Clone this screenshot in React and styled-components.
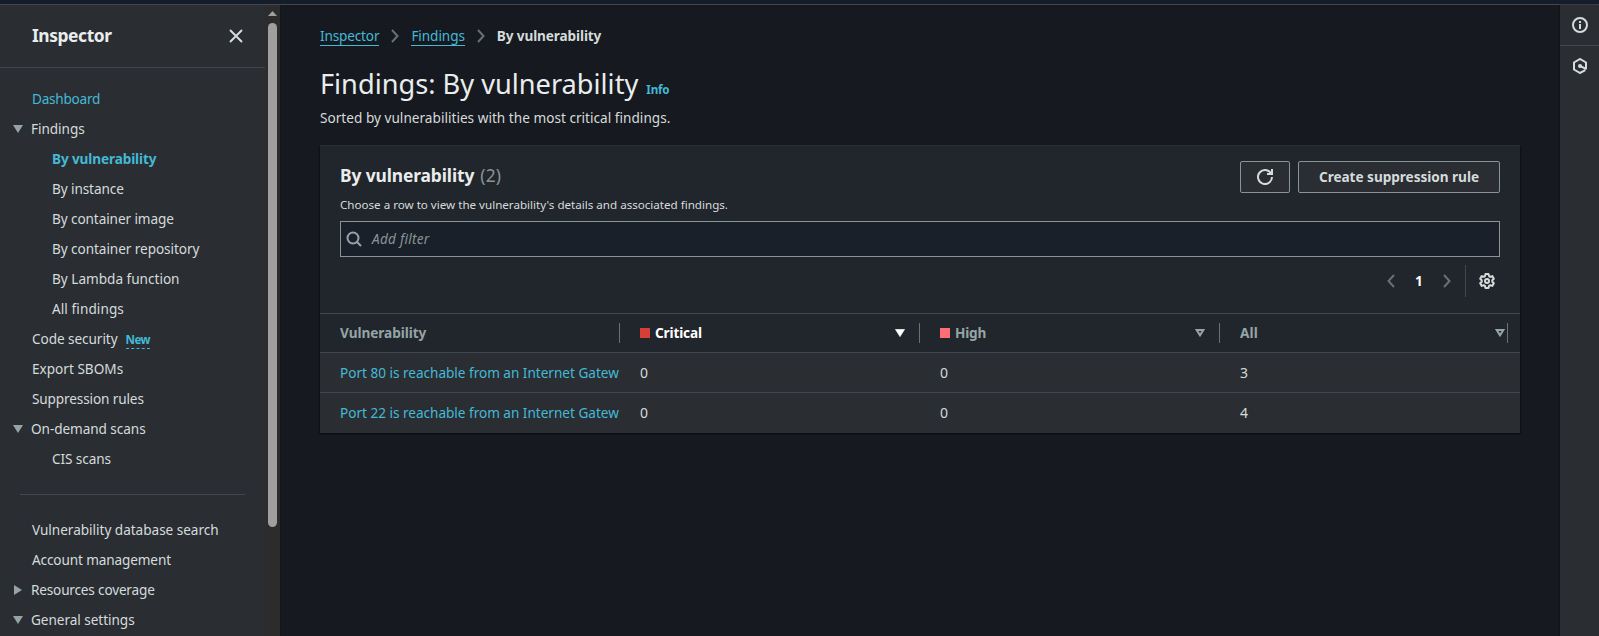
import React from "react";
import styled, { createGlobalStyle, css } from "styled-components";

const color = {
  page: "#16191f",
  panel: "#21252c",
  surface: "#2a2e33",
  line: "#414750",
  text: "#d5dbdb",
  heading: "#eaeded",
  muted: "#95a5a6",
  control: "#879596",
  disabled: "#687078",
  link: "#44b9d6",
};

const GlobalStyle = createGlobalStyle`
  * { box-sizing: border-box; }
  body {
    margin: 0;
    overflow: hidden;
    background: ${color.page};
    color: ${color.text};
    font-family: "Noto Sans", "Open Sans", sans-serif;
    font-size: 13.6px;
    line-height: 20px;
  }
  svg { display: block; flex: none; }
  h1, h2, p, ul { margin: 0; padding: 0; }
  a { color: ${color.link}; text-decoration: none; }
`;

const tracked = css`
  letter-spacing: ${(p) => p.$track ?? -0.03}px;
  white-space: nowrap;
`;

const Shell = styled.div`
  display: flex;
  flex-direction: column;
  height: 636px;
`;

const TopStrip = styled.div`
  height: 5px;
  flex: none;
  background: #161d2a;
  border-bottom: 1px solid ${color.line};
`;

const Body = styled.div`
  display: flex;
  flex: 1;
  min-height: 0;
`;

/* Side navigation */

const Sidebar = styled.nav`
  display: flex;
  width: 281px;
  flex: none;
  background: ${color.surface};
  border-right: 1px solid #121519;
  overflow: hidden;
`;

const SideContent = styled.div`
  width: 265px;
  flex: none;
`;

const SideHeader = styled.header`
  display: flex;
  align-items: center;
  justify-content: space-between;
  height: 63px;
  padding: 0 21px 1px 32px;
  border-bottom: 1px solid ${color.line};
`;

const SideTitle = styled.h2`
  ${tracked}
  margin-bottom: 2px;
  color: ${color.heading};
  font-size: 17.4px;
  line-height: 22px;
`;

const NavList = styled.ul`
  list-style: none;
  padding-top: ${(p) => p.$top}px;
`;

const NavRow = styled.li`
  display: flex;
  align-items: center;
  height: 30px;
  padding-left: ${(p) => ({ top: 32, group: 13, nested: 52 })[p.$kind]}px;
`;

const NavLink = styled.a`
  ${tracked}
  color: ${(p) => (p.$blue ? color.link : color.text)};
  font-weight: ${(p) => (p.$bold ? 700 : 400)};
`;

const GroupArrow = styled.svg`
  width: 10px;
  height: 10px;
  margin-right: 8px;
  fill: ${color.muted};
`;

const NewTag = styled.span`
  ${tracked}
  height: 18px;
  margin: 2px 0 0 8px;
  color: ${color.link};
  border-bottom: 1px dashed ${color.link};
  font-size: 11.65px;
  font-weight: 700;
  line-height: 17px;
`;

const NavDivider = styled.hr`
  height: 1px;
  margin: 20px 20px 0;
  border: 0;
  background: ${color.line};
`;

const ScrollTrack = styled.div`
  display: flex;
  flex-direction: column;
  align-items: center;
  width: 15px;
  padding-top: 6px;
  background: #2c2c2c;
`;

const ScrollThumb = styled.div`
  width: 9px;
  height: 504px;
  margin-top: 7px;
  border-radius: 5px;
  background: #9f9f9f;
`;

/* Main column */

const Main = styled.main`
  flex: 1;
  min-width: 0;
  padding: 21px 40px 0 39px;
`;

const Breadcrumbs = styled.nav`
  display: flex;
  align-items: center;
  height: 20px;
`;

const Crumb = styled.a`
  ${tracked}
  height: 20px;
  border-bottom: 1px solid ${color.link};
`;

const CurrentCrumb = styled.span`
  ${tracked}
  color: ${color.text};
  font-weight: 700;
`;

const CrumbArrow = styled.svg`
  width: 8px;
  height: 14px;
  margin: 0 12px;
  fill: none;
  stroke: ${color.disabled};
  stroke-width: 2;
`;

const PageHeading = styled.div`
  display: flex;
  align-items: baseline;
  height: 36px;
  margin-top: 20px;
`;

const PageTitle = styled.h1`
  ${tracked}
  color: ${color.heading};
  font-size: 27.2px;
  font-weight: 400;
  line-height: 36px;
`;

const InfoLink = styled.a`
  ${tracked}
  margin-left: 8px;
  font-size: 11.65px;
  font-weight: 700;
`;

const PageNote = styled.p`
  ${tracked}
  margin: 6px 0 17px;
`;

const Panel = styled.section`
  background: ${color.panel};
  border-top: 1px solid #2a2e33;
  box-shadow: 0 1px 1px #0b0d10, 1px 1px 1px #101317, -1px 1px 1px #101317;
`;

const PanelTop = styled.div`
  display: flex;
  flex-direction: column;
  height: 167px;
  padding: 15px 20px 0;
`;

const PanelHeader = styled.div`
  display: flex;
  justify-content: space-between;
  height: 60px;
`;

const PanelTitle = styled.h2`
  ${tracked}
  display: flex;
  gap: 6px;
  margin-top: 2px;
  color: ${color.heading};
  font-size: 17.4px;
  line-height: 24px;
`;

const Count = styled.span`
  color: ${color.control};
  font-weight: 400;
  letter-spacing: 0.2px;
`;

const PanelNote = styled.p`
  ${tracked}
  margin-top: 10px;
  font-size: 11.65px;
  line-height: 16px;
`;

const Actions = styled.div`
  display: flex;
  gap: 8px;
`;

const Button = styled.button`
  ${tracked}
  display: flex;
  align-items: center;
  justify-content: center;
  width: ${(p) => p.$width}px;
  height: 32px;
  padding: 0;
  border: 1px solid ${color.control};
  border-radius: 2px;
  background: ${color.surface};
  color: ${color.text};
  font: inherit;
  font-weight: 700;
`;

const FilterBox = styled.div`
  ${tracked}
  display: flex;
  align-items: center;
  gap: 10px;
  height: 36px;
  flex: none;
  padding-left: 5px;
  border: 1px solid ${color.control};
  background: #1a2029;
  color: ${color.control};
  font-style: italic;
`;

const Pager = styled.div`
  display: flex;
  align-items: center;
  justify-content: flex-end;
  height: 32px;
  margin-top: 8px;
  padding-right: 5px;
`;

const PageNumber = styled.span`
  width: 48px;
  color: #fff;
  font-weight: 700;
  text-align: center;
`;

const PagerArrow = styled.svg`
  width: 8px;
  height: 14px;
  fill: none;
  stroke: ${color.disabled};
  stroke-width: 2;
`;

const PreferencesSlot = styled.div`
  display: flex;
  align-items: center;
  height: 32px;
  margin-left: 14px;
  padding-left: 13px;
  border-left: 1px solid ${color.line};
`;

const LineIcon = styled.svg`
  width: 16px;
  height: 16px;
  fill: none;
  stroke: ${(p) => p.$stroke || color.text};
  stroke-width: 2;
`;

/* Table */

const TableRow = styled.div`
  display: grid;
  grid-template-columns: 300px 300px 300px 300px;
  align-items: center;
  height: ${(p) => p.$height}px;
  border-top: 1px solid ${color.line};
  background: ${(p) => (p.$head ? color.panel : color.surface)};
`;

const HeadCell = styled.div`
  display: flex;
  align-items: center;
  height: 20px;
  margin-right: ${(p) => (p.$last ? 12 : 0)}px;
  padding: 0 ${(p) => (p.$last ? 2 : 14)}px 0 20px;
  border-right: 1px solid ${color.disabled};
  color: ${(p) => (p.$active ? "#fff" : color.muted)};
  font-weight: 700;
`;

const HeadLabel = styled.span`
  ${tracked}
  flex: 1;
`;

const Swatch = styled.span`
  width: 10px;
  height: 10px;
  margin-right: 5px;
  background: ${(p) => p.$fill};
`;

const SortArrow = styled.svg`
  width: 10px;
  height: 8px;
  margin-top: -1px;
  fill: ${(p) => (p.$filled ? "currentColor" : "none")};
  stroke: currentColor;
  stroke-width: ${(p) => (p.$filled ? 0.5 : 2)};
`;

const Cell = styled.div`
  padding-left: 20px;
`;

const NumberCell = styled(Cell)`
  font-size: 14px;
`;

const RowLink = styled.a`
  ${tracked}
  display: block;
  overflow: hidden;
`;

/* Tool rail */

const Rail = styled.aside`
  width: 39px;
  flex: none;
  background: ${color.surface};
  box-shadow: -1px 0 1px #101317;
`;

const RailButton = styled.div`
  display: flex;
  align-items: center;
  justify-content: center;
  height: ${(p) => (p.$ruled ? 41 : 40)}px;
  padding-left: 1px;
  border-bottom: ${(p) => (p.$ruled ? `1px solid ${color.line}` : "0")};
`;

const navMain = [
  { label: "Dashboard", kind: "top", blue: true, track: -0.24 },
  { label: "Findings", kind: "group", track: -0.05 },
  { label: "By vulnerability", kind: "nested", blue: true, bold: true, track: -0.12 },
  { label: "By instance", kind: "nested", track: -0.1 },
  { label: "By container image", kind: "nested", track: -0.1 },
  { label: "By container repository", kind: "nested", track: -0.07 },
  { label: "By Lambda function", kind: "nested", track: -0.01 },
  { label: "All findings", kind: "nested", track: 0.08 },
  { label: "Code security", kind: "top", isNew: true, track: -0.07 },
  { label: "Export SBOMs", kind: "top", track: 0 },
  { label: "Suppression rules", kind: "top", track: -0.13 },
  { label: "On-demand scans", kind: "group", track: -0.07 },
  { label: "CIS scans", kind: "nested", track: -0.1 },
];

const navMore = [
  { label: "Vulnerability database search", kind: "top", track: -0.03 },
  { label: "Account management", kind: "top", track: -0.13 },
  { label: "Resources coverage", kind: "group", closed: true, track: -0.18 },
  { label: "General settings", kind: "group", track: -0.05 },
];

const findings = [
  { title: "Port 80 is reachable from an Internet Gatew", critical: 0, high: 0, all: 3 },
  { title: "Port 22 is reachable from an Internet Gatew", critical: 0, high: 0, all: 4 },
];

function NavItems({ items, top }) {
  return (
    <NavList $top={top}>
      {items.map((item) => (
        <NavRow key={item.label} $kind={item.kind}>
          {item.kind === "group" && (
            <GroupArrow viewBox="0 0 10 10">
              <path d={item.closed ? "M1 0 9 5 1 10z" : "M0 1h10L5 9z"} />
            </GroupArrow>
          )}
          <NavLink $blue={item.blue} $bold={item.bold} $track={item.track}>
            {item.label}
          </NavLink>
          {item.isNew && <NewTag $track={-0.6}>New</NewTag>}
        </NavRow>
      ))}
    </NavList>
  );
}

function Chevron({ as: Icon, left }) {
  return (
    <Icon viewBox="0 0 8 14">
      <path d={left ? "M7 1 1.5 7 7 13" : "M1 1 6.5 7 1 13"} />
    </Icon>
  );
}

function Sort({ filled }) {
  return (
    <SortArrow viewBox="0 0 10 8" $filled={filled}>
      <path d={filled ? "M.3.3h9.4L5 7.7z" : "M1.7 1h6.6L5 6.3z"} />
    </SortArrow>
  );
}

export default function App() {
  return (
    <Shell>
      <GlobalStyle />
      <TopStrip />
      <Body>
        <Sidebar>
          <SideContent>
            <SideHeader>
              <SideTitle $track={-0.42}>Inspector</SideTitle>
              <LineIcon viewBox="0 0 16 16">
                <path d="m2 2 12 12M14 2 2 14" />
              </LineIcon>
            </SideHeader>
            <NavItems items={navMain} top={16} />
            <NavDivider />
            <NavItems items={navMore} top={20} />
          </SideContent>
          <ScrollTrack>
            <svg width="9" height="5" viewBox="0 0 9 5" fill="#9f9f9f">
              <path d="M4.5 0 9 5H0z" />
            </svg>
            <ScrollThumb />
          </ScrollTrack>
        </Sidebar>

        <Main>
          <Breadcrumbs>
            <Crumb $track={-0.16}>Inspector</Crumb>
            <Chevron as={CrumbArrow} />
            <Crumb $track={-0.08}>Findings</Crumb>
            <Chevron as={CrumbArrow} />
            <CurrentCrumb $track={-0.12}>By vulnerability</CurrentCrumb>
          </Breadcrumbs>
          <PageHeading>
            <PageTitle $track={0}>Findings: By vulnerability</PageTitle>
            <InfoLink $track={-0.2}>Info</InfoLink>
          </PageHeading>
          <PageNote $track={0.02}>
            Sorted by vulnerabilities with the most critical findings.
          </PageNote>

          <Panel>
            <PanelTop>
              <PanelHeader>
                <div>
                  <PanelTitle $track={-0.11}>
                    By vulnerability <Count>(2)</Count>
                  </PanelTitle>
                  <PanelNote $track={-0.02}>
                    Choose a row to view the vulnerability's details and associated findings.
                  </PanelNote>
                </div>
                <Actions>
                  <Button $width={50} aria-label="Refresh">
                    <LineIcon viewBox="0 0 16 16">
                      <path d="M10 5h5V0M15 8a7 7 0 1 1-.9-3.4" />
                    </LineIcon>
                  </Button>
                  <Button $width={202} $track={-0.03}>Create suppression rule</Button>
                </Actions>
              </PanelHeader>
              <FilterBox $track={0.25}>
                <LineIcon viewBox="0 0 16 16" $stroke={color.muted}>
                  <circle cx="7" cy="7" r="5.5" />
                  <path d="m11 11 4 4" />
                </LineIcon>
                Add filter
              </FilterBox>
              <Pager>
                <Chevron as={PagerArrow} left />
                <PageNumber>1</PageNumber>
                <Chevron as={PagerArrow} />
                <PreferencesSlot>
                  <LineIcon viewBox="0 0 16 16">
                    <path
                      strokeLinejoin="round"
                      d="M6.5 1h3l.5 2.1 1.2.7 2.1-.7 1.5 2.6-1.5 1.5v1.6l1.5 1.5-1.5 2.6-2.1-.7-1.2.7-.5 2.1h-3L6 12.9l-1.2-.7-2.1.7-1.5-2.6 1.5-1.5V7.2L1.2 5.7l1.5-2.6 2.1.7L6 3.1z"
                    />
                    <circle cx="8" cy="8" r="2" />
                  </LineIcon>
                </PreferencesSlot>
              </Pager>
            </PanelTop>

            <TableRow $head $height={39}>
              <HeadCell>
                <HeadLabel $track={-0.05}>Vulnerability</HeadLabel>
              </HeadCell>
              <HeadCell $active>
                <Swatch $fill="#d63f38" />
                <HeadLabel $track={-0.15}>Critical</HeadLabel>
                <Sort filled />
              </HeadCell>
              <HeadCell>
                <Swatch $fill="#fe6e73" />
                <HeadLabel $track={-0.2}>High</HeadLabel>
                <Sort />
              </HeadCell>
              <HeadCell $last>
                <HeadLabel $track={0.1}>All</HeadLabel>
                <Sort />
              </HeadCell>
            </TableRow>
            {findings.map((f, i) => (
              <TableRow key={f.title} $height={i === 0 ? 40 : 41}>
                <Cell>
                  <RowLink $track={-0.02}>{f.title}</RowLink>
                </Cell>
                <NumberCell>{f.critical}</NumberCell>
                <NumberCell>{f.high}</NumberCell>
                <NumberCell>{f.all}</NumberCell>
              </TableRow>
            ))}
          </Panel>
        </Main>

        <Rail>
          <RailButton $ruled>
            <LineIcon viewBox="0 0 16 16">
              <circle cx="8" cy="8" r="7" />
              <path d="M8 7v5M8 4v2" />
            </LineIcon>
          </RailButton>
          <RailButton>
            <LineIcon viewBox="0 0 16 16">
              <path d="M13.3 12.2 8 15l-6-3.500v-7L8 1l6 3.500V11M8 8l6.500 3.200" />
              <circle cx="8" cy="8" r="1" />
            </LineIcon>
          </RailButton>
        </Rail>
      </Body>
    </Shell>
  );
}
